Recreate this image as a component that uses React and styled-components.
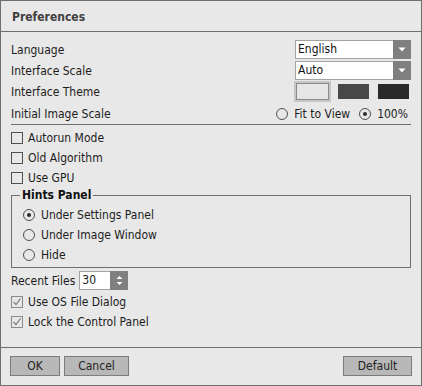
import React from 'react';
import styled, { createGlobalStyle } from 'styled-components';

// flat gray "desktop app" palette
const colors = {
  bg: '#e8e8e8',
  frame: '#6e6e6e',
  text: '#1c1c1c',
  title: '#404040',
  field: '#ffffff',
  fieldBorder: '#a3a3a3',
  arrowBg: '#7f7f7f',
  button: '#b8b8b8',
  buttonBorder: '#7c7c7c',
  mark: '#505050',
  softMark: '#8a8a8a',
};

const GlobalStyle = createGlobalStyle`
  html, body {
    margin: 0;
    padding: 0;
    background: ${colors.bg};
  }
  body {
    font-family: "DejaVu Sans Condensed", "DejaVu Sans", "Liberation Sans", sans-serif;
    font-size: 12px;
    color: ${colors.text};
  }
  * { box-sizing: border-box; }
`;

const Window = styled.div`
  width: 422px;
  height: 386px;
  border: 1px solid ${colors.frame};
  background: ${colors.bg};
  display: flex;
  flex-direction: column;
  overflow: hidden;
`;

const TitleBar = styled.div`
  height: 31px;
  flex-shrink: 0;
  padding: 1px 0 0 11px;
  display: flex;
  align-items: center;
  border-bottom: 1px solid ${colors.frame};
  font-weight: bold;
  color: ${colors.title};
`;

const Content = styled.div`
  flex: 1;
  padding: 8px 10px 0 10px;
  display: flex;
  flex-direction: column;
`;

const SettingRow = styled.div`
  height: ${p => p.$h || 19}px;
  margin-top: ${p => p.$mt || 0}px;
  margin-bottom: ${p => p.$mb || 0}px;
  display: flex;
  align-items: center;
  justify-content: space-between;
  white-space: nowrap;
`;

const Label = styled.span`
  line-height: 14px;
`;

const Select = styled.div`
  width: 116px;
  height: 19px;
  display: flex;
  background: ${colors.field};
  border: 1px solid ${colors.fieldBorder};
  border-right: none;
`;

const SelectValue = styled.span`
  flex: 1;
  padding-left: 2px;
  line-height: 17px;
  color: #111;
`;

const ArrowBox = styled.span`
  width: 18px;
  margin-top: -1px;
  margin-bottom: -1px;
  background: ${colors.arrowBg};
  display: flex;
  align-items: center;
  justify-content: center;
`;

const Swatches = styled.div`
  display: flex;
  align-items: center;
  gap: 9px;
  padding-right: 2px;
`;

const Swatch = styled.span`
  width: ${p => (p.$selected ? 33 : 31)}px;
  height: ${p => (p.$selected ? 17 : 15)}px;
  background: ${p => p.$color};
  border: ${p => (p.$selected ? '1px solid #8a8a8a' : 'none')};
  box-shadow: ${p => (p.$selected ? '0 0 0 2px #c6c6c6' : 'none')};
`;

const RadioGroup = styled.div`
  display: flex;
  align-items: center;
  gap: 9px;
  padding-right: 3px;
`;

const Option = styled.label`
  display: flex;
  align-items: center;
  gap: ${p => p.$gap || 6}px;
  height: ${p => p.$h || 19}px;
  white-space: nowrap;
`;

const RadioCircle = styled.span`
  width: 12px;
  height: 12px;
  border-radius: 50%;
  border: 1px solid ${colors.mark};
  display: flex;
  align-items: center;
  justify-content: center;
  flex-shrink: 0;

  &::after {
    content: '';
    width: 4px;
    height: 4px;
    border-radius: 50%;
    background: #2a2a2a;
    display: ${p => (p.$checked ? 'block' : 'none')};
  }
`;

const Divider = styled.div`
  height: 1px;
  background: ${colors.frame};
  margin: ${p => p.$m || '0'};
`;

const CheckBox = styled.span`
  width: 12px;
  height: 12px;
  flex-shrink: 0;
  border: 1px solid ${p => (p.$checked ? colors.softMark : colors.mark)};
  display: flex;
  align-items: center;
  justify-content: center;
`;

const Group = styled.fieldset`
  margin: 0;
  padding: 3px 10px 2px 11px;
  border: 1px solid ${colors.frame};
  display: flex;
  flex-direction: column;
`;

const Legend = styled.legend`
  padding: 0 2px;
  margin-left: -3px;
  font-weight: bold;
  line-height: 14px;
  color: #111;
`;

const SpinRow = styled.div`
  display: flex;
  align-items: center;
  gap: 4px;
  height: 19px;
  margin: 3px 0 2px 0;
`;

const SpinBox = styled.div`
  width: 49px;
  height: 19px;
  display: flex;
  background: ${colors.field};
  border: 1px solid ${colors.fieldBorder};
  border-right: none;
`;

const SpinValue = styled.span`
  flex: 1;
  padding-left: 2px;
  line-height: 17px;
`;

const SpinButtons = styled.span`
  width: 18px;
  margin: -1px 0;
  background: ${colors.arrowBg};
  display: flex;
  align-items: center;
  justify-content: center;
`;

const Footer = styled.div`
  height: 38px;
  flex-shrink: 0;
  border-top: 1px solid ${colors.frame};
  padding: 8px 9px 0 9px;
  display: flex;
  align-items: flex-start;
  justify-content: space-between;
`;

const ButtonGroup = styled.div`
  display: flex;
  gap: 4px;
`;

const Button = styled.button`
  width: ${p => p.$w}px;
  height: 20px;
  padding: 0;
  background: ${colors.button};
  border: 1px solid ${colors.buttonBorder};
  border-radius: 0;
  font: inherit;
  color: #222;
  line-height: 18px;
`;

const DownArrow = () => (
  <svg width="8" height="5" viewBox="0 0 8 5">
    <path d="M0.5 0.5 L7.5 0.5 L4 4.5 Z" fill="#ffffff" />
  </svg>
);

const SpinArrows = () => (
  <svg width="7" height="11" viewBox="0 0 7 11">
    <path d="M0.5 4 L3.5 1 L6.5 4 Z" fill="#ffffff" />
    <path d="M0.5 7 L3.5 10 L6.5 7 Z" fill="#ffffff" />
  </svg>
);

const Check = () => (
  <svg width="10" height="10" viewBox="0 0 10 10">
    <path d="M1.5 4.8 L4 7.5 L8.5 1.5" fill="none" stroke="#7a7a7a" strokeWidth="1.2" />
  </svg>
);

const Dropdown = ({ value }) => (
  <Select>
    <SelectValue>{value}</SelectValue>
    <ArrowBox><DownArrow /></ArrowBox>
  </Select>
);

const Radio = ({ checked, children }) => (
  <Option $h={20}>
    <RadioCircle $checked={checked} />
    {children}
  </Option>
);

const Checkbox = ({ checked, children }) => (
  <Option $h={20} $gap={5}>
    <CheckBox $checked={checked}>{checked && <Check />}</CheckBox>
    {children}
  </Option>
);

export default function App() {
  return (
    <>
      <GlobalStyle />
      <Window>
        <TitleBar>Preferences</TitleBar>
        <Content>
          <SettingRow $mb={2}>
            <Label>Language</Label>
            <Dropdown value="English" />
          </SettingRow>
          <SettingRow $mb={2}>
            <Label>Interface Scale</Label>
            <Dropdown value="Auto" />
          </SettingRow>
          <SettingRow>
            <Label>Interface Theme</Label>
            <Swatches>
              <Swatch $color="#e6e6e6" $selected />
              <Swatch $color="#484848" />
              <Swatch $color="#2a2a2a" />
            </Swatches>
          </SettingRow>
          <SettingRow $mt={3}>
            <Label>Initial Image Scale</Label>
            <RadioGroup>
              <Option>
                <RadioCircle />
                Fit to View
              </Option>
              <Option>
                <RadioCircle $checked />
                100%
              </Option>
            </RadioGroup>
          </SettingRow>
          <Divider $m="1px 0 3px 0" />

          <Checkbox>Autorun Mode</Checkbox>
          <Checkbox>Old Algorithm</Checkbox>
          <Checkbox>Use GPU</Checkbox>

          <Group>
            <Legend>Hints Panel</Legend>
            <Radio checked>Under Settings Panel</Radio>
            <Radio>Under Image Window</Radio>
            <Radio>Hide</Radio>
          </Group>

          <SpinRow>
            <Label>Recent Files</Label>
            <SpinBox>
              <SpinValue>30</SpinValue>
              <SpinButtons><SpinArrows /></SpinButtons>
            </SpinBox>
          </SpinRow>
          <Checkbox checked>Use OS File Dialog</Checkbox>
          <Checkbox checked>Lock the Control Panel</Checkbox>
        </Content>
        <Footer>
          <ButtonGroup>
            <Button $w={50}>OK</Button>
            <Button $w={65}>Cancel</Button>
          </ButtonGroup>
          <Button $w={69}>Default</Button>
        </Footer>
      </Window>
    </>
  );
}
